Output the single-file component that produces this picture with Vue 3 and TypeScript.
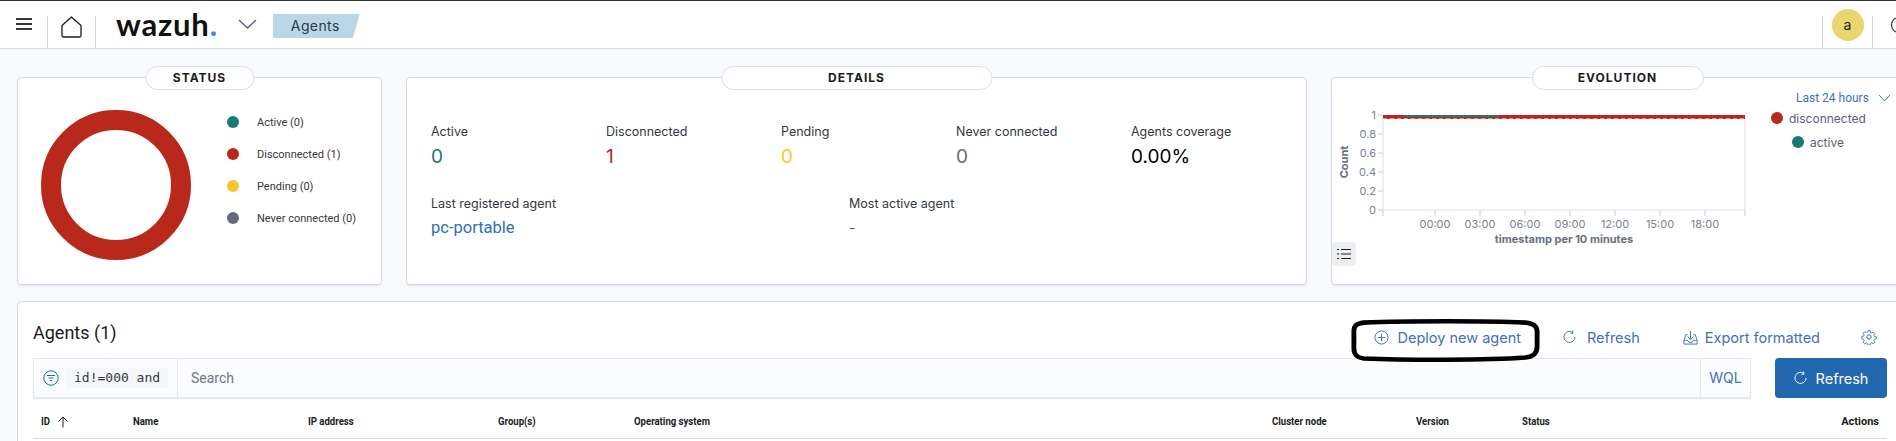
<script setup lang="ts">
const legend = [
  { label: 'Active (0)', color: '#1b7a70' },
  { label: 'Disconnected (1)', color: '#b8291c' },
  { label: 'Pending (0)', color: '#fec42c' },
  { label: 'Never connected (0)', color: '#676c7c' },
];

const stats = [
  { label: 'Active', value: '0', color: '#1b7a70' },
  { label: 'Disconnected', value: '1', color: '#b8291c' },
  { label: 'Pending', value: '0', color: '#fec42c' },
  { label: 'Never connected', value: '0', color: '#676c7c' },
  { label: 'Agents coverage', value: '0.00%', color: '#000' },
];

const yTicks = [
  { label: '1', y: 115 },
  { label: '0.8', y: 134 },
  { label: '0.6', y: 153 },
  { label: '0.4', y: 172 },
  { label: '0.2', y: 191 },
  { label: '0', y: 210 },
];

const xTicks = ['00:00', '03:00', '06:00', '09:00', '12:00', '15:00', '18:00'].map((label, i) => ({
  label,
  x: 104 + i * 45,
}));

const columns = ['Name', 'IP address', 'Group(s)', 'Operating system', 'Cluster node', 'Version', 'Status'];
</script>

<template>
  <div class="page">
    <header class="topbar">
      <button class="menu-btn" aria-label="Menu">
        <svg width="16" height="12" viewBox="0 0 16 12"><path d="M0 1h16M0 6h16M0 11h16" stroke="#343741" stroke-width="2" /></svg>
      </button>
      <div class="home-cell">
        <svg width="21" height="22" viewBox="0 0 21 22" fill="none" stroke="#1a1c21" stroke-width="1.3">
          <path d="M1 9.5 10.5 1 20 9.5V19.5a1.5 1.5 0 0 1-1.5 1.5h-16A1.5 1.5 0 0 1 1 19.5z" stroke-linejoin="round" />
        </svg>
      </div>
      <div class="logo">wazuh<span class="logo-dot">.</span></div>
      <svg class="logo-chevron" width="19" height="10" viewBox="0 0 19 10" fill="none" stroke="#5a6075" stroke-width="1.3"><path d="m1 1 8.500 8L18 1" /></svg>
      <div class="crumb">Agents</div>
      <div class="topbar-right">
        <div class="avatar-cell"><span class="avatar">a</span></div>
        <div class="help-cell">
          <svg width="18" height="18" viewBox="0 0 18 18" fill="none" stroke="#343741" stroke-width="1.2"><circle cx="9" cy="9" r="7.500" /><path d="M6.800 7a2.200 2.200 0 1 1 3.300 1.900c-.7.4-1.100.8-1.100 1.600M9 12.500v1" /></svg>
        </div>
      </div>
    </header>

    <section class="cards">
      <div class="card status-card">
        <div class="pill pill-status">STATUS</div>
        <svg class="donut" width="150" height="150" viewBox="0 0 150 150">
          <circle cx="75" cy="75" r="65" fill="none" stroke="#b8291c" stroke-width="20" />
        </svg>
        <ul class="legend">
          <li v-for="item in legend" :key="item.label">
            <span class="dot" :style="{ background: item.color }"></span>{{ item.label }}
          </li>
        </ul>
      </div>

      <div class="card details-card">
        <div class="pill pill-details">DETAILS</div>
        <div class="stats">
          <div v-for="s in stats" :key="s.label" class="stat">
            <div class="stat-label">{{ s.label }}</div>
            <div class="stat-value" :style="{ color: s.color }">{{ s.value }}</div>
          </div>
        </div>
        <div class="agents-row">
          <div class="stat last-agent">
            <div class="stat-label">Last registered agent</div>
            <div class="agent-link">pc-portable</div>
          </div>
          <div class="stat">
            <div class="stat-label">Most active agent</div>
            <div class="agent-none">-</div>
          </div>
        </div>
      </div>

      <div class="card evolution-card">
        <div class="pill pill-evolution">EVOLUTION</div>
        <svg class="chart" width="440" height="206" viewBox="0 0 440 206">
          <g transform="translate(0,-77)">
            <path d="M52 115V210H414V115" fill="none" stroke="#dcdfe8" />
            <path d="M52 210v6" stroke="#c8ccd8" />
            <g v-for="t in yTicks" :key="t.label">
              <path :d="`M47 ${t.y}h5`" stroke="#c8ccd8" />
              <text x="45" :y="t.y + 4" text-anchor="end" class="tick">{{ t.label }}</text>
            </g>
            <g v-for="t in xTicks" :key="t.label">
              <path :d="`M${t.x} 210v6`" stroke="#c8ccd8" />
              <text :x="t.x" y="228" text-anchor="middle" class="tick">{{ t.label }}</text>
            </g>
            <path d="M414 210v6" stroke="#c8ccd8" />
            <path d="M52 117H414" stroke="#b8291c" stroke-width="4" />
            <path d="M73 116H168" stroke="#1b7a70" stroke-width="2" />
            <path d="M52 119H414" stroke="#fff" stroke-width="1" stroke-dasharray="4 3" />
            <text x="233" y="243" text-anchor="middle" class="axis">timestamp per 10 minutes</text>
            <text transform="translate(17,162) rotate(-90)" text-anchor="middle" class="axis">Count</text>
          </g>
        </svg>
        <button class="list-btn" aria-label="Toggle legend">
          <svg width="14" height="12" viewBox="0 0 14 12"><path d="M4 1.500h10M4 6h10M4 10.500h10M0 1.500h2M0 6h2M0 10.500h2" stroke="#1a1c21" stroke-width="1" /></svg>
        </button>
        <div class="chart-side">
          <div class="range">Last 24 hours
            <svg width="13" height="8" viewBox="0 0 13 8" fill="none" stroke="#3f6fbd" stroke-width="1"><path d="m1 1 5.500 6L12 1" /></svg>
          </div>
          <div class="chart-legend first"><span class="chart-dot red"></span>disconnected</div>
          <div class="chart-legend second"><span class="chart-dot green"></span>active</div>
        </div>
      </div>
    </section>

    <section class="panel">
      <div class="panel-head">
        <h2 class="panel-title">Agents (1)</h2>
        <div class="panel-actions">
          <span class="action deploy">
            <svg width="15" height="15" viewBox="0 0 16 16" fill="none" stroke="currentColor"><circle cx="8" cy="8" r="7" /><path d="M8 4v8M4 8h8" /></svg>
            Deploy new agent
          </span>
          <span class="action refresh">
            <svg width="13" height="14" viewBox="0 0 14 15" fill="none" stroke="currentColor"><path d="M10.500 2.500a6 6 0 1 0 2.500 5" /><path d="M10.500 .5v3h-2.500" /></svg>
            Refresh
          </span>
          <span class="action export">
            <svg width="15" height="15" viewBox="0 0 16 16" fill="none" stroke="currentColor"><path d="M5 5H3l-2 6v4h14v-4l-2-6h-2M8 1v9M5 7l3 3 3-3M1 11h4l1 2h4l1-2h4" /></svg>
            Export formatted
          </span>
          <svg class="gear" width="16" height="16" viewBox="0 0 16 16" fill="none" stroke="#3f6fbd"><circle cx="8" cy="8" r="2.200" /><path d="M6.800 1h2.400l.4 2 1.400.6 1.800-1.100 1.700 1.700-1.100 1.800.6 1.400 2 .4v2.400l-2 .4-.6 1.400 1.100 1.800-1.700 1.700-1.800-1.100-1.400.6-.4 2H6.800l-.4-2-1.400-.6-1.800 1.100-1.700-1.700 1.100-1.800-.6-1.400-2-.4V7.400l2-.4.6-1.400-1.100-1.800 1.700-1.700L5 3.200l1.400-.6z" transform="translate(.8 .8) scale(.9)" /></svg>
        </div>
      </div>

      <div class="search-row">
        <div class="search-box">
          <div class="search-prefix">
            <svg width="16" height="16" viewBox="0 0 16 16" fill="none" stroke="#2268b1"><circle cx="8" cy="8" r="7.200" /><path d="M4 5.500h8M5.500 8h5M7 10.500h2" /></svg>
            <code class="implicit">id!=000 and</code>
          </div>
          <div class="search-input">Search</div>
          <div class="search-lang">WQL</div>
        </div>
        <button class="refresh-btn">
          <svg width="13" height="14" viewBox="0 0 14 15" fill="none" stroke="#fff"><path d="M10.500 2.500a6 6 0 1 0 2.500 5" /><path d="M10.500 .5v3h-2.500" /></svg>
          Refresh
        </button>
      </div>

      <div class="table-head">
        <span class="col-id"><span class="th">ID</span>
          <svg width="12" height="12" viewBox="0 0 12 12" fill="none" stroke="#1a1c21"><path d="M6 11.500V1M1.500 5.500 6 1l4.500 4.500" /></svg>
        </span>
        <span v-for="c in columns" :key="c"><span class="th">{{ c }}</span></span>
        <span class="col-actions">Actions</span>
      </div>

      <svg class="marker" width="191" height="46" viewBox="0 0 196 50" preserveAspectRatio="none" fill="none" stroke="#000" stroke-width="5">
        <path d="M14 5C60 3 140 3 180 5c9 1 12 4 12 10v16c0 8-4 11-12 12-40 3-120 3-166 1-7-1-10-4-10-11V14c0-6 3-8 10-9z" />
      </svg>
    </section>
  </div>
</template>

<style>
html,
body {
  margin: 0;
  background: #f9fafd;
  overflow: hidden;
}
</style>

<style scoped>
.page {
  width: 1920px;
  height: 441px;
  overflow: hidden;
  background: #f9fafd;
  color: #343741;
  font-family: Inter, "Liberation Sans", sans-serif;
  font-size: 14px;
}

.topbar {
  display: flex;
  align-items: stretch;
  height: 49px;
  box-sizing: border-box;
  background: #fff;
  border-top: 1px solid #333;
  border-bottom: 1px solid #d3dae6;
}

.menu-btn {
  width: 48px;
  border: 0;
  border-right: 1px solid #d3dae6;
  background: none;
  margin-top: 15px;
  height: 32px;
  display: flex;
  justify-content: center;
  align-items: flex-start;
  padding: 2px 0 0;
}

.home-cell {
  width: 47px;
  height: 32px;
  margin-top: 15px;
  border-right: 1px solid #d3dae6;
  display: flex;
  justify-content: center;
  align-items: flex-start;
}

.logo {
  margin-left: 20px;
  font-family: Lato, Inter, sans-serif;
  font-size: 31px;
  font-weight: 700;
  line-height: 46px;
  letter-spacing: 0.8px;
  color: #111;
}

.logo-dot {
  color: #3d82f1;
}

.logo-chevron {
  margin: 18px 0 0 20px;
}

.crumb {
  margin: 13px 0 0 16px;
  width: 87px;
  height: 24px;
  line-height: 24px;
  text-align: center;
  padding-right: 2px;
  box-sizing: border-box;
  background: #bad7ea;
  clip-path: polygon(0 0, 100% 0, 92% 100%, 0 100%);
  letter-spacing: 0.4px;
}

.topbar-right {
  margin-left: auto;
  display: flex;
}

.avatar-cell {
  width: 49px;
  height: 32px;
  margin-top: 15px;
  border-left: 1px solid #d3dae6;
  border-right: 1px solid #d3dae6;
  display: flex;
  justify-content: center;
}

.avatar {
  width: 32px;
  height: 32px;
  margin-top: -7px;
  border-radius: 50%;
  background: #e9d66f;
  color: #1a1c21;
  font-size: 14px;
  line-height: 32px;
  text-align: center;
}

.help-cell {
  width: 47px;
  box-sizing: border-box;
  padding: 2px 0 0 17px;
  margin-top: 13px;
}

.cards {
  display: grid;
  grid-template-columns: 365px 901px 573px;
  column-gap: 24px;
  padding: 28px 0 0 17px;
}

.card {
  position: relative;
  height: 208px;
  box-sizing: border-box;
  background: #fff;
  border: 1px solid #d3dae6;
  border-radius: 4px;
  box-shadow: 0 2px 2px -1px rgba(152, 162, 179, 0.3);
}

.pill {
  position: absolute;
  top: -12px;
  left: 50%;
  transform: translateX(-50%);
  height: 24px;
  box-sizing: border-box;
  border: 1px solid #d9dfec;
  border-radius: 12px;
  background: #fff;
  color: #1a1c21;
  font-size: 12px;
  font-weight: 700;
  line-height: 22px;
  letter-spacing: 1px;
  text-align: center;
}

.pill-status { width: 109px; }
.pill-details { width: 271px; }
.pill-evolution { width: 172px; }

.status-card {
  display: flex;
}

.donut {
  margin: 32px 0 0 23px;
}

.legend {
  list-style: none;
  margin: 32px 0 0 36px;
  padding: 0;
  font-family: Roboto, sans-serif;
  font-size: 11px;
}

.legend li {
  display: flex;
  align-items: center;
  height: 24px;
  margin-bottom: 8px;
  color: #343741;
}

.dot {
  width: 12px;
  height: 12px;
  margin-right: 18px;
  border-radius: 50%;
}

.details-card {
  padding: 44px 0 0 24px;
}

.stats {
  display: grid;
  grid-template-columns: repeat(5, 175px);
}

.stat-label {
  font-size: 12.5px;
  line-height: 20px;
  color: #343741;
}

.stat-value {
  margin-top: 2px;
  font-size: 19px;
  line-height: 26px;
}

.agents-row {
  display: flex;
  margin-top: 24px;
}

.last-agent {
  width: 418px;
}

.agent-link {
  margin-top: 2px;
  font-family: Roboto, sans-serif;
  font-size: 16.500px;
  line-height: 24px;
  color: #2e6fb4;
}

.agent-none {
  margin-top: 2px;
  line-height: 24px;
  color: #5a6075;
}

.chart {
  position: absolute;
  left: -1px;
  top: -1px;
}

.tick {
  font-family: Inter, sans-serif;
  font-size: 11px;
  fill: #7a8194;
}

.axis {
  font-family: Inter, sans-serif;
  font-size: 11px;
  font-weight: 700;
  fill: #69707d;
}

.list-btn {
  position: absolute;
  left: 0;
  top: 164px;
  width: 24px;
  height: 24px;
  padding: 0;
  border: 0;
  border-radius: 4px;
  background: #eceef2;
  display: flex;
  align-items: center;
  justify-content: center;
}

.chart-side {
  position: absolute;
  left: 439px;
  top: 11px;
  width: 130px;
  font-family: Roboto, sans-serif;
  font-size: 12px;
}

.range {
  display: flex;
  align-items: center;
  gap: 9px;
  padding-left: 25px;
  height: 18px;
  color: #3f6fbd;
}

.chart-legend {
  display: flex;
  align-items: center;
  gap: 6px;
  height: 20px;
  color: #5a6075;
  font-family: Inter, sans-serif;
}

.first { margin-top: 1px; }
.second { margin-top: 4px; padding-left: 21px; }

.chart-dot {
  width: 12px;
  height: 12px;
  border-radius: 50%;
}

.red { background: #b8291c; }
.green { background: #1b7a70; }

.panel {
  position: relative;
  margin: 16px 17px 0;
  height: 160px;
  box-sizing: border-box;
  padding: 0 15px;
  background: #fff;
  border: 1px solid #d3dae6;
  border-radius: 4px;
}

.panel-head {
  display: flex;
  align-items: center;
  height: 56px;
}

.panel-title {
  margin: 5px 0 0;
  font-family: Roboto, sans-serif;
  font-size: 18px;
  font-weight: 400;
  color: #1a1c21;
}

.panel-actions {
  margin-left: auto;
  display: flex;
  align-items: center;
  color: #3f6fbd;
  font-size: 14.500px;
  padding-right: 10px;
  margin-top: 14px;
}

.action {
  display: flex;
  align-items: center;
  gap: 9px;
}

.refresh { margin-left: 42px; gap: 11px; }
.export { margin-left: 43px; gap: 7px; }
.gear { margin-left: 41px; }

.search-row {
  display: flex;
  gap: 24px;
}

.search-box {
  flex: 1;
  height: 40px;
  box-sizing: border-box;
  display: flex;
  align-items: stretch;
  background: #fbfcfd;
  border: 1px solid #e4e7f0;
  box-shadow: 0 1px 1px rgba(152, 162, 179, 0.25);
}

.search-prefix {
  width: 144px;
  display: flex;
  align-items: center;
  gap: 7px;
  padding-left: 9px;
  box-sizing: border-box;
  border-right: 1px solid #e4e7f0;
}

.implicit {
  padding: 0 8px;
  height: 20px;
  line-height: 20px;
  background: #f5f7fa;
  font-family: "DejaVu Sans Mono", monospace;
  font-size: 13px;
  color: #343741;
}

.search-input {
  flex: 1;
  padding-left: 13px;
  line-height: 38px;
  font-family: Roboto, sans-serif;
  color: #6f7585;
}

.search-lang {
  width: 49px;
  border-left: 1px solid #e4e7f0;
  line-height: 38px;
  text-align: center;
  color: #3f6fbd;
}

.refresh-btn {
  width: 112px;
  height: 40px;
  border: 0;
  border-radius: 4px;
  background: #2268b1;
  color: #fff;
  font-family: Inter, sans-serif;
  font-size: 14.500px;
  display: flex;
  align-items: center;
  justify-content: center;
  gap: 9px;
}

.table-head {
  display: grid;
  grid-template-columns: 92px 175px 190px 136px 638px 144px 106px 1fr;
  align-items: center;
  height: 41px;
  box-sizing: border-box;
  padding: 7px 8px 0;
  border-bottom: 1px solid #d3dae6;
  font-family: Roboto, sans-serif;
  font-size: 11px;
  font-weight: 700;
  color: #1a1c21;
}

.th {
  display: inline-block;
  transform: scaleX(0.87);
  transform-origin: left center;
}

.col-id {
  display: flex;
  align-items: center;
  gap: 6px;
}

.col-actions {
  grid-column: 9;
  justify-self: end;
}

.marker {
  position: absolute;
  left: 1332px;
  top: 16px;
}
</style>
